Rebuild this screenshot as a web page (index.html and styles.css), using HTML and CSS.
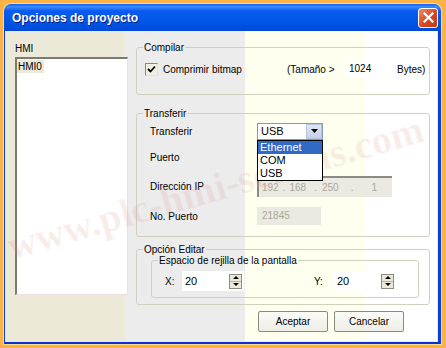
FILE: index.html
```html
<!DOCTYPE html>
<html lang="es">
<head>
<meta charset="UTF-8">
<title>Opciones de proyecto</title>
<link rel="stylesheet" href="styles.css">
</head>
<body>

<div class="window">
    <div class="titlebar">
        <span class="title">Opciones de proyecto</span>
        <span class="close">
            <svg width="11" height="11" viewBox="0 0 11 11"><path d="M1.5 1.5 L9.5 9.5 M9.5 1.5 L1.5 9.5" stroke="#fff" stroke-width="2.2" stroke-linecap="square"/></svg>
        </span>
    </div>

    <div class="client">
        <div class="left">
            <div class="hmi-label">HMI</div>
            <div class="listbox">
                <span class="item sel">HMI0</span>
            </div>
        </div>

        <div class="right">
            <fieldset class="group compilar">
                <legend>Compilar</legend>
                <div class="compile-row">
                    <span class="check">
                        <svg width="9" height="9" viewBox="0 0 9 9"><path d="M1 4 L3.5 6.5 L8 1.5" fill="none" stroke="#000" stroke-width="1.8"/></svg>
                    </span>
                    <span class="check-text">Comprimir bitmap</span>
                    <span class="size-text">(Tamaño &gt;</span>
                    <span class="size-edit">1024</span>
                    <span class="bytes">Bytes)</span>
                </div>
            </fieldset>

            <fieldset class="group transferir">
                <legend>Transferir</legend>
                <div class="form-grid">
                    <label>Transferir</label>
                    <div class="combo-wrap">
                        <div class="combo">
                            <span class="combo-val">USB</span>
                            <span class="dd-btn">
                                <svg width="7" height="4" viewBox="0 0 7 4"><path d="M0 0 H7 L3.5 4 Z" fill="#000"/></svg>
                            </span>
                        </div>
                        <ul class="dropdown">
                            <li class="active">Ethernet</li>
                            <li>COM</li>
                            <li>USB</li>
                        </ul>
                    </div>

                    <label>Puerto</label>
                    <div></div>

                    <label>Dirección IP</label>
                    <div class="ipbox">
                        <span>192</span><span>.</span><span>168</span><span>.</span><span>250</span><span>.</span><span>1</span>
                    </div>

                    <label>No. Puerto</label>
                    <div class="portbox">21845</div>
                </div>
            </fieldset>

            <fieldset class="group editar">
                <legend>Opción Editar</legend>
                <fieldset class="group inner">
                    <legend>Espacio de rejilla de la pantalla</legend>
                    <div class="spin-row">
                        <span class="axis">X:</span>
                        <div class="spin-edit">
                            <span>20</span>
                            <span class="spin"><span class="up"></span><span class="down"></span></span>
                        </div>
                        <span class="axis axis-y">Y:</span>
                        <div class="spin-edit">
                            <span>20</span>
                            <span class="spin"><span class="up"></span><span class="down"></span></span>
                        </div>
                    </div>
                </fieldset>
            </fieldset>

            <div class="buttons">
                <button class="btn">Aceptar</button>
                <button class="btn">Cancelar</button>
            </div>
        </div>
    </div>

    <div class="watermark">www.plc-hmi-scadas.com</div>
</div>

</body>
</html>
```

FILE: styles.css
```css
* {
    margin: 0;
    padding: 0;
    box-sizing: border-box;
}

body {
    background: #fbb347;
    padding: 4px 5px 4px 4px;
    font-family: "Liberation Sans", Arial, sans-serif;
    font-size: 10px;
    color: #000;
    overflow: hidden;
}

.window {
    position: relative;
    width: 437px;
    height: 340px;
    overflow: hidden;
    border-radius: 7px 7px 0 0;
    box-shadow: 0 0 0 1px #ffd98c;
}

/* title bar */

.titlebar {
    height: 27px;
    display: flex;
    align-items: center;
    padding-left: 8px;
    background: linear-gradient(#0a5ff0 0%, #3d8bff 10%, #0a5cf0 25%, #0055e5 70%, #0048d8 100%);
}

.title {
    flex: 1;
    color: #fff;
    font-weight: bold;
    font-size: 12px;
    text-shadow: 1px 1px #0a1e8c;
}

.close {
    width: 20px;
    height: 20px;
    margin-right: 3px;
    display: flex;
    align-items: center;
    justify-content: center;
    border: 1px solid #fff;
    border-radius: 3px;
    background: linear-gradient(135deg, #f08a6c, #d9471f 55%, #c23a14);
}

/* dialog body */

.client {
    height: 313px;
    display: flex;
    gap: 8px;
    padding: 10px 0 0 10px;
    border-left: 1px solid #0b3fd6;
    border-right: 3px solid #0b3fd6;
    border-bottom: 2px solid #0831d9;
    box-shadow: inset 1px 0 #dfe8ff, inset -1px -1px #dfe8ff;
    background: linear-gradient(to right, #ece9d8 0 120px, #ececec 120px 240px, #fffff0 240px 360px, #fff 360px);
}

.left {
    width: 113px;
    padding-top: 1px;
}

.hmi-label {
    height: 13px;
    line-height: 13px;
    margin-bottom: 2px;
}

.listbox {
    height: 238px;
    background: #fff;
    border-top: 2px solid #7b7b73;
    border-left: 2px solid #7b7b73;
    border-right: 1px solid #f0dede;
    border-bottom: 1px solid #f0dede;
    padding-top: 1px;
}

.item {
    display: inline-block;
    line-height: 13px;
    padding: 0 2px 0 1px;
}

.item.sel {
    background: #ece9d8;
}

.right {
    width: 294px;
}

/* group boxes */

.group {
    border: 1px solid #d0d0bf;
    border-radius: 3px;
    padding-left: 6px;
}

.group legend {
    line-height: 13px;
    padding: 0 1px;
}

.compilar {
    padding-top: 7px;
    padding-bottom: 17px;
}

.compile-row {
    display: flex;
    align-items: center;
    height: 16px;
    margin-left: 2px;
}

.check {
    width: 13px;
    height: 13px;
    display: flex;
    align-items: center;
    justify-content: center;
    background: #f1efe2;
    border-top: 1px solid #8a8a80;
    border-left: 1px solid #8a8a80;
    border-right: 1px solid #e4e2d6;
    border-bottom: 1px solid #e4e2d6;
}

.check-text {
    width: 124px;
    margin-left: 5px;
}

.size-text {
    width: 58px;
}

.size-edit {
    width: 50px;
    height: 16px;
    line-height: 16px;
    padding-left: 4px;
    background: #fff;
}

.bytes {
    margin-left: 2px;
}

.transferir {
    margin-top: 12px;
    padding-top: 1px;
    padding-bottom: 4px;
}

.form-grid {
    display: grid;
    grid-template-columns: 107px 136px;
    grid-template-rows: 20px 32px 27px 32px;
    align-items: center;
    margin-left: 7px;
}

.combo-wrap {
    position: relative;
    width: 66px;
}

.combo {
    height: 17px;
    display: flex;
    align-items: center;
    background: #fff;
    border: 1px solid #7f9db9;
    font-size: 11px;
}

.combo-val {
    flex: 1;
    padding-left: 3px;
}

.dd-btn {
    width: 16px;
    height: 15px;
    display: flex;
    align-items: center;
    justify-content: center;
    background: linear-gradient(#dfe6f5, #c5d1ea);
    border: 1px solid #b8c5e0;
}

.dropdown {
    position: absolute;
    top: 17px;
    left: 0;
    width: 66px;
    list-style: none;
    background: #fff;
    border: 1px solid #000;
    font-size: 11px;
    z-index: 2;
}

.dropdown li {
    line-height: 13px;
    padding-left: 2px;
}

.dropdown li.active {
    background: #316ac5;
    color: #fff;
}

.ipbox {
    width: 135px;
    height: 21px;
    display: flex;
    align-items: center;
    padding-left: 3px;
    color: #aca899;
    background: #ebeae2;
    border-top: 2px solid #8b8b84;
    border-left: 2px solid #8b8b84;
}

.ipbox span:nth-child(2) { margin-left: 4px; }
.ipbox span:nth-child(3) { margin-left: 4px; }
.ipbox span:nth-child(4) { margin-left: 8px; }
.ipbox span:nth-child(5) { margin-left: 5px; }
.ipbox span:nth-child(6) { margin-left: 12px; }
.ipbox span:nth-child(7) { margin-left: 18px; }

.portbox {
    width: 64px;
    height: 18px;
    line-height: 18px;
    padding-left: 5px;
    color: #aca899;
    background: #ebeae2;
}

.editar {
    margin-top: 6px;
    padding-right: 10px;
    padding-bottom: 6px;
}

.group.inner {
    margin: -2px 0 0 8px;
    padding-top: 4px;
    padding-bottom: 6px;
}

.spin-row {
    display: flex;
    align-items: center;
    height: 20px;
    margin-left: 7px;
}

.axis {
    width: 17px;
}

.axis-y {
    margin-left: 70px;
    width: 20px;
}

.spin-edit {
    width: 62px;
    height: 20px;
    display: flex;
    align-items: center;
    justify-content: space-between;
    padding: 0 2px 0 3px;
    background: #fff;
    font-size: 11px;
}

.spin {
    width: 13px;
    height: 15px;
    display: flex;
    flex-direction: column;
    border: 1px solid #8d8c80;
    background: #ece9d8;
}

.spin .up,
.spin .down {
    flex: 1;
    display: flex;
    align-items: center;
    justify-content: center;
}

.spin .up::after {
    content: "";
    border: 3px solid transparent;
    border-bottom: 3px solid #000;
    border-top: none;
}

.spin .down {
    border-top: 1px solid #b5b3a6;
}

.spin .down::after {
    content: "";
    border: 3px solid transparent;
    border-top: 3px solid #000;
    border-bottom: none;
}

/* buttons */

.buttons {
    display: flex;
    gap: 6px;
    margin-top: 6px;
    padding-left: 122px;
}

.btn {
    width: 70px;
    height: 21px;
    font-family: inherit;
    font-size: 10px;
    color: #000;
    background: linear-gradient(#fbfbf8, #eeede6);
    border: 1px solid #8a8a80;
    border-radius: 2px;
}

/* watermark over the dialog */

.watermark {
    position: absolute;
    left: 10px;
    top: 218px;
    font-family: "Liberation Serif", serif;
    font-weight: bold;
    font-size: 40px;
    white-space: nowrap;
    color: rgba(225, 140, 125, 0.09);
    text-shadow: 1px 1px rgba(200, 120, 110, 0.06);
    transform: rotate(-16deg);
    transform-origin: left bottom;
    pointer-events: none;
}
```
